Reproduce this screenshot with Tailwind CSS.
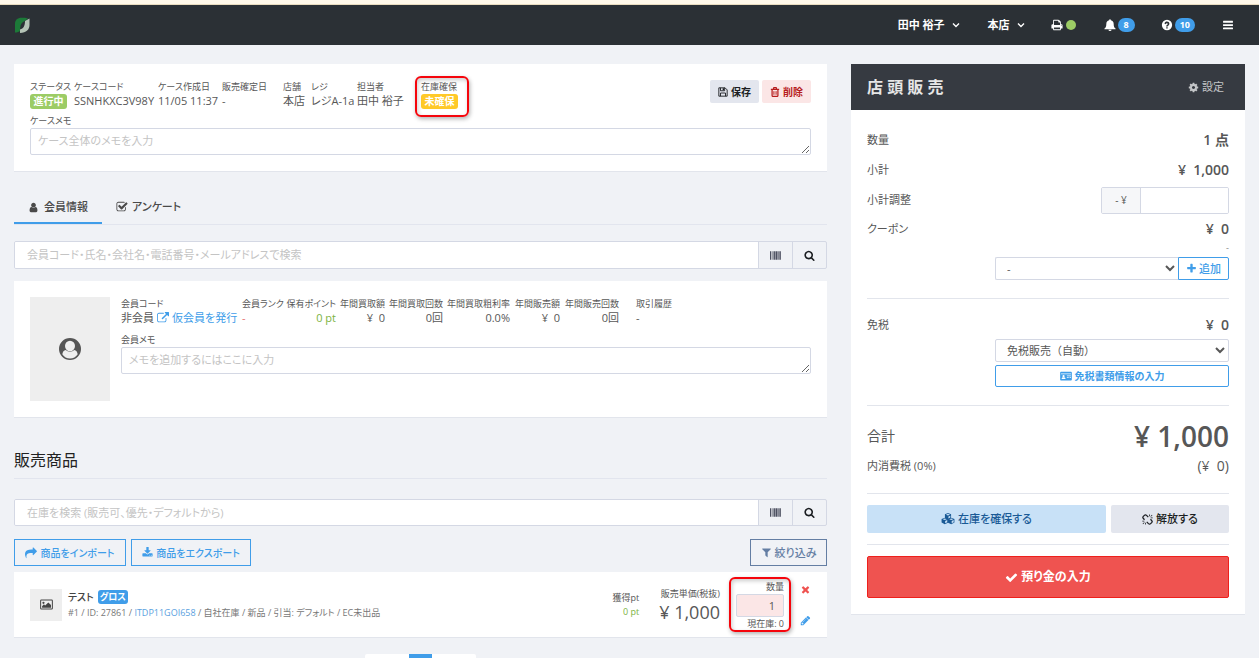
<!DOCTYPE html>
<html lang="ja">
<head>
<meta charset="utf-8">
<meta name="viewport" content="width=device-width, initial-scale=1">
<title>店頭販売</title>
<script src="https://cdn.jsdelivr.net/npm/@tailwindcss/browser@4"></script>
</head>
<body class="flex h-screen flex-col bg-[#f0f2f6] font-['Open_Sans','Noto_Sans_CJK_JP',sans-serif] text-[11px] leading-4 text-[#575757] [font-feature-settings:'palt']">
<svg class="hidden" aria-hidden="true">
  <symbol id="user" viewBox="0 0 1792 1792"><path d="M1536 1399q0 109-62.500 187t-150.500 78h-854q-88 0-150.500-78t-62.500-187q0-85 8.500-160.500t31.500-152 58.500-131 94-89 134.500-34.500q131 128 313 128t313-128q76 0 134.500 34.500t94 89 58.500 131 31.500 152 8.500 160.500zm-256-887q0 159-112.500 271.500t-271.500 112.500-271.500-112.500-112.500-271.500 112.500-271.500 271.500-112.500 271.500 112.500 112.500 271.500z"/></symbol>
  <symbol id="search" viewBox="0 0 1792 1792"><path d="M1216 832q0-185-131.5-316.5t-316.5-131.5-316.5 131.5-131.5 316.5 131.5 316.5 316.5 131.5 316.5-131.5 131.5-316.5zm512 832q0 52-38 90t-90 38q-54 0-90-38l-343-342q-179 124-399 124-143 0-273.5-55.5t-225-150-150-225-55.5-273.5 55.5-273.5 150-225 225-150 273.5-55.5 273.5 55.5 225 150 150 225 55.5 273.5q0 220-124 399l343 343q37 37 37 90z"/></symbol>
  <symbol id="check" viewBox="0 0 1792 1792"><path d="M1671 566q0 40-28 68l-724 724-136 136q-28 28-68 28t-68-28l-136-136-362-362q-28-28-28-68t28-68l136-136q28-28 68-28t68 28l294 295 656-657q28-28 68-28t68 28l136 136q28 28 28 68z"/></symbol>
  <symbol id="times" viewBox="0 0 1792 1792"><path d="M1490 1322q0 40-28 68l-136 136q-28 28-68 28t-68-28l-294-294-294 294q-28 28-68 28t-68-28l-136-136q-28-28-28-68t28-68l294-294-294-294q-28-28-28-68t28-68l136-136q28-28 68-28t68 28l294 294 294-294q28-28 68-28t68 28l136 136q28 28 28 68t-28 68l-294 294 294 294q28 28 28 68z"/></symbol>
  <symbol id="plus" viewBox="0 0 1792 1792"><path d="M1600 736v192q0 40-28 68t-68 28h-416v416q0 40-28 68t-68 28h-192q-40 0-68-28t-28-68v-416h-416q-40 0-68-28t-28-68v-192q0-40 28-68t68-28h416v-416q0-40 28-68t68-28h192q40 0 68 28t28 68v416h416q40 0 68 28t28 68z"/></symbol>
  <symbol id="pencil" viewBox="0 0 1792 1792"><path d="M491 1536l91-91-235-235-91 91v107h128v128h107zm523-928q0-22-22-22-10 0-17 7l-542 542q-7 7-7 17 0 22 22 22 10 0 17-7l542-542q7-7 7-17zm-54-192l416 416-832 832h-416v-416zm683 96q0 53-37 90l-166 166-416-416 166-165q36-38 90-38 53 0 91 38l235 234q37 39 37 91z"/></symbol>
  <symbol id="cog" viewBox="0 0 1792 1792"><path d="M1152 896q0-106-75-181t-181-75-181 75-75 181 75 181 181 75 181-75 75-181zm512-109v222q0 12-8 23t-20 13l-185 28q-19 54-39 91 35 50 107 138 10 12 10 25t-9 23q-27 37-99 108t-94 71q-12 0-26-9l-138-108q-44 23-91 38-16 136-29 186-7 28-36 28h-222q-14 0-24.5-8.5t-11.5-21.5l-28-184q-49-16-90-37l-141 107q-10 9-25 9-14 0-25-11-126-114-165-168-7-10-7-23 0-12 8-23 15-21 51-66.5t54-70.5q-27-50-41-99l-183-27q-13-2-21-12.5t-8-23.5v-222q0-12 8-23t19-13l186-28q14-46 39-92-40-57-107-138-10-12-10-24 0-10 9-23 26-36 98.5-107.5t94.5-71.5q13 0 26 10l138 107q44-23 91-38 16-136 29-186 7-28 36-28h222q14 0 24.5 8.5t11.5 21.5l28 184q49 16 90 37l142-107q9-9 24-9 13 0 25 10 129 119 165 170 7 8 7 22 0 12-8 23-15 21-51 66.5t-54 70.5q26 50 41 98l183 28q13 2 21 12.5t8 23.5z"/></symbol>
  <symbol id="filter" viewBox="0 0 1792 1792"><path d="M1595 295q17 41-14 70l-493 493v742q0 42-39 59-13 5-25 5-27 0-45-19l-256-256q-19-19-19-45v-486l-493-493q-31-29-14-70 17-39 59-39h1280q42 0 59 39z"/></symbol>
  <symbol id="share" viewBox="0 0 1792 1792"><path d="M1792 640q0 26-19 45l-512 512q-19 19-45 19t-45-19-19-45v-256h-224q-98 0-175.5 6t-154 21.5-133 42.5-105.5 69.5-80 101-48.5 138.5-17.5 181q0 55 5 123 0 6 2.5 23.5t2.5 26.5q0 15-8.5 25t-23.5 10q-16 0-28-17-7-9-13-22t-13.5-30-10.5-24q-127-285-127-451 0-199 53-333 162-403 875-403h224v-256q0-26 19-45t45-19 45 19l512 512q19 19 19 45z"/></symbol>
  <symbol id="download" viewBox="0 0 1792 1792"><path d="M1344 1344q0-26-19-45t-45-19-45 19-19 45 19 45 45 19 45-19 19-45zm256 0q0-26-19-45t-45-19-45 19-19 45 19 45 45 19 45-19 19-45zm128-224v320q0 40-28 68t-68 28h-1472q-40 0-68-28t-28-68v-320q0-40 28-68t68-28h465l135 136q58 56 136 56t136-56l136-136h464q40 0 68 28t28 68zm-325-569q17 41-14 70l-448 448q-18 19-45 19t-45-19l-448-448q-31-29-14-70 17-39 59-39h256v-448q0-26 19-45t45-19h256q26 0 45 19t19 45v448h256q42 0 59 39z"/></symbol>
  <symbol id="external" viewBox="0 0 1792 1792"><path d="M1408 928v320q0 119-84.500 203.500t-203.500 84.500h-832q-119 0-203.500-84.500t-84.500-203.500v-832q0-119 84.500-203.500t203.500-84.500h704q14 0 23 9t9 23v64q0 14-9 23t-23 9h-704q-66 0-113 47t-47 113v832q0 66 47 113t113 47h832q66 0 113-47t47-113v-320q0-14 9-23t23-9h64q14 0 23 9t9 23zm384-864v512q0 26-19 45t-45 19-45-19l-176-176-652 652q-10 10-23 10t-23-10l-114-114q-10-10-10-23t10-23l652-652-176-176q-19-19-19-45t19-45 45-19h512q26 0 45 19t19 45z"/></symbol>
  <symbol id="check-square" viewBox="0 0 1792 1792"><path d="M1472 930v318q0 119-84.5 203.5t-203.5 84.5h-832q-119 0-203.5-84.5t-84.5-203.5v-832q0-119 84.5-203.5t203.5-84.5h832q63 0 117 25 15 7 18 23 3 17-9 29l-49 49q-10 10-23 10-3 0-9-2-23-6-45-6h-832q-66 0-113 47t-47 113v832q0 66 47 113t113 47h832q66 0 113-47t47-113v-254q0-13 9-22l64-64q10-10 23-10 6 0 12 3 20 8 20 29zm231-489l-814 814q-24 24-57 24t-57-24l-430-430q-24-24-24-57t24-57l110-110q24-24 57-24t57 24l263 263 647-647q24-24 57-24t57 24l110 110q24 24 24 57t-24 57z"/></symbol>
  <symbol id="print" viewBox="0 0 1792 1792"><path d="M448 1536h896v-256h-896v256zm0-640h896v-384h-160q-40 0-68-28t-28-68v-160h-640v640zm1152 64q0-26-19-45t-45-19-45 19-19 45 19 45 45 19 45-19 19-45zm128 0v416q0 13-9.500 22.500t-22.500 9.500h-224v160q0 40-28 68t-68 28h-960q-40 0-68-28t-28-68v-160h-224q-13 0-22.500-9.500t-9.500-22.500v-416q0-79 56.500-135.500t135.500-56.500h64v-544q0-40 28-68t68-28h672q40 0 88 20t76 48l152 152q28 28 48 76t20 88v256h64q79 0 135.500 56.500t56.500 135.500z"/></symbol>
  <symbol id="bell" viewBox="0 0 14 14"><path d="M7 0.300c.6 0 1 .4 1 1v.3c2 .4 3.300 2 3.300 4.200 0 3 .9 4.400 2.200 5.400v.8H.5v-.8c1.300-1 2.200-2.400 2.200-5.400 0-2.200 1.300-3.800 3.300-4.200v-.3c0-.6.4-1 1-1zM5.200 12.500h3.600a1.800 1.500 0 0 1-3.600 0z"/></symbol>
  <symbol id="question" viewBox="0 0 14 14"><path fill-rule="evenodd" d="M7 1a6 6 0 1 1 0 12A6 6 0 0 1 7 1zM6.100 9.500v1.700h1.700V9.500zM4 5.200l1.300 1C5.900 5.300 6.300 5 6.900 5c.6 0 1 .3 1 .8 0 .9-1.900 1-1.900 2.700v.3h1.800c0-1 2-1.300 2-3.200C9.800 4 8.500 3 7 3 5.600 3 4.700 3.700 4 5.200z"/></symbol>
  <symbol id="bars" viewBox="0 0 12 12"><rect x="0" y="1" width="12" height="2.200" rx=".5"/><rect x="0" y="5" width="12" height="2.200" rx=".5"/><rect x="0" y="9" width="12" height="2.200" rx=".5"/></symbol>
  <symbol id="angle" viewBox="0 0 8 8"><path d="M1 2.500l3 3 3-3" fill="none" stroke="currentColor" stroke-width="1.400"/></symbol>
  <symbol id="floppy" viewBox="0 0 12 12"><path d="M1 1h7.500L11 3.500V11H1zM3 1v3.500h5V1M3 11V7.200h6V11" fill="none" stroke="currentColor" stroke-width="1.100"/><rect x="5.600" y="1.500" width="1.600" height="2.300"/></symbol>
  <symbol id="trash" viewBox="0 0 12 12"><path d="M1 2.800h10M4 2.500l.6-1.700h2.800L8 2.500M2.500 3v7.200q0 1.100 1 1.100h5q1 0 1-1.100V3" fill="none" stroke="currentColor" stroke-width="1.500"/><path d="M4.700 5v4.300M7.300 5v4.300" fill="none" stroke="currentColor" stroke-width="1.200"/></symbol>
  <symbol id="barcode" viewBox="0 0 13 10"><path d="M0 0h1.200v10H0zM2 0h.8v10H2zM3.400 0h.8v10h-.8zM4.800 0h1.700v10H4.800zM7 0h1.500v10H7zM9 0h.8v10H9zM10.200 0h1.200v10h-1.200zM12 0h1v10h-1z"/></symbol>
  <symbol id="person-circle" viewBox="0 0 24 24"><path fill-rule="evenodd" d="M12 1a11 11 0 1 1 0 22 11 11 0 0 1 0-22zm0 2.700A5 5.200 0 0 0 7 9a5 5.200 0 0 0 10 0 5 5.200 0 0 0-5-5.300zM4.300 17.200C6 20 8.800 21.600 12 21.600s6-1.600 7.700-4.400c-.4-2.200-1.500-4-3.400-4.200a6.300 6.300 0 0 1-8.600 0c-1.900.2-3 2-3.400 4.200z"/></symbol>
  <symbol id="cubes" viewBox="0 0 16 14"><path fill-rule="evenodd" d="M8 0l3.600 1.500v3.900L15.500 7v4.200L11.800 13 8 11.300 4.200 13 .5 11.200V7l3.900-1.600V1.500zm0 1L5.600 2 8 3l2.400-1zM8.500 4v2.300l2.200-1V3.100zM4.200 6.300L1.900 7.300l2.300 1 2.300-1zm7.600 0l-2.300 1 2.300 1 2.300-1zM4.700 9.300v2.600l2.400-1.100V8.300zm7.600 0v2.600l2.300-1.100V8.300z"/></symbol>
  <symbol id="unlink" viewBox="0 0 14 14"><g fill="none" stroke="currentColor" stroke-width="1.600"><path d="M3.200 7.300L1.800 5.800A2 2 0 0 1 1.700 3L3 1.700a2 2 0 0 1 2.800 0L8 4M10.800 6.700l1.400 1.500a2 2 0 0 1 .1 2.800L11 12.300a2 2 0 0 1-2.800 0L6 10"/></g><path d="M9 .500h1V3H9zM10.700 3l2-2 .6.600-2 2zM11 4.500h2.600v1H11zM.4 8.500H3v1H.4zM.7 12.400l2-2 .6.600-2 2zM4 11h1v2.500H4z"/></symbol>
  <symbol id="id-card" viewBox="0 0 14 12"><path fill-rule="evenodd" d="M1 1h12q1 0 1 1v8.500q0 1-1 1H1q-1 0-1-1V2q0-1 1-1zM1 3v.8h12V3zM4 4.700a1.300 1.400 0 1 0 .1 0zM1.800 9.500h4.600c0-1.500-.6-2-1.200-2.100q-1.100.7-2.200 0c-.6.100-1.200.6-1.200 2.100zM8 5.500v.9h5v-.9zm0 2v.9h2.300v-.9zm3.200 0v.9H13v-.9z"/></symbol>
  <symbol id="picture" viewBox="0 0 14 12"><rect x=".6" y="1.100" width="12.800" height="9.800" rx=".8" fill="none" stroke="currentColor" stroke-width="1.100"/><circle cx="3.700" cy="4.200" r="1.200"/><path d="M2.200 9.500V7.800l2-2 1.300 1.300 3.500-3.400 2.900 2.900v2.900z"/></symbol>
</svg>

<div class="h-[5px] shrink-0 border-b border-[#e9dcbf] bg-[#fff8ea]"></div>
<header class="flex h-10 shrink-0 items-center justify-between bg-[#2b3035] pr-[26px] pl-[14px] text-white">
  <a href="#" aria-label="ホーム">
    <svg class="size-4" viewBox="0 0 16 16"><path fill="#1c7a38" d="M1 15.500V7C1 3 3.500 .800 7.500 .800h3.500L14 1.500 11 4C8 5 6.300 7.500 6.200 11L6 13.500c-.5 1.500-3 2-5 2z"/><path fill="#b4c3b6" d="M15.500 1.500V8c0 4.500-3 7.500-9.500 8v-3.500c3.500-1 5-3.500 5-8.500z"/></svg>
  </a>
  <nav class="flex items-center text-[11px] font-bold">
    <button class="flex items-center gap-[7px]">田中 裕子<svg class="size-2"><use href="#angle"/></svg></button>
    <button class="ml-7 flex items-center gap-[7px]">本店<svg class="size-2"><use href="#angle"/></svg></button>
    <button class="ml-[26px] flex items-center gap-[3px]" aria-label="プリンタ"><svg class="size-3 fill-current"><use href="#print"/></svg><span class="size-[10px] rounded-full bg-[#9ccc65]"></span></button>
    <button class="ml-7 flex items-center gap-[2px]" aria-label="通知"><svg class="size-3 fill-current"><use href="#bell"/></svg><span class="rounded-full bg-[#409de9] px-[6px] text-[9px] leading-[14px]">8</span></button>
    <button class="ml-[26px] flex items-center gap-[2px]" aria-label="ヘルプ"><svg class="size-3 fill-current"><use href="#question"/></svg><span class="rounded-full bg-[#409de9] px-[5px] text-[9px] leading-[14px]">10</span></button>
    <button class="ml-7 flex" aria-label="メニュー"><svg class="size-[10px] fill-current"><use href="#bars"/></svg></button>
  </nav>
</header>

<main class="grid flex-1 grid-cols-[813fr_394fr] items-start gap-6 overflow-y-auto px-[14px] pt-[19px] [scrollbar-width:none]">
  <div class="min-w-0">
    <section class="border-b border-[#e2e5ec] bg-white p-4">
      <div class="flex items-start justify-between">
        <dl class="flex text-[11px] leading-[14px] whitespace-nowrap [&_dt]:text-[9px]">
          <div class="w-11"><dt>ステータス</dt><dd><span class="block w-[37px] rounded-[3px] bg-[#9ccc65] text-center text-[10px] leading-[15px] font-bold text-white">進行中</span></dd></div>
          <div class="w-[84px]"><dt>ケースコード</dt><dd>SSNHKXC3V98Y</dd></div>
          <div class="w-16"><dt>ケース作成日</dt><dd>11/05 11:37</dd></div>
          <div class="w-[61px]"><dt>販売確定日</dt><dd>-</dd></div>
          <div class="w-7"><dt>店舗</dt><dd>本店</dd></div>
          <div class="w-[46px]"><dt>レジ</dt><dd>レジA-1a</dd></div>
          <div class="w-16"><dt>担当者</dt><dd>田中 裕子</dd></div>
          <div class="relative"><dt>在庫確保</dt><dd><span class="block w-[37px] rounded-[3px] bg-[#ffc928] text-center text-[10px] leading-[15px] font-bold text-white">未確保</span></dd>
            <span class="absolute -top-1 -left-[6px] h-[41px] w-[54px] rounded-md border-2 border-[#f5050c] shadow-[1px_2px_4px_rgba(0,0,0,0.3),inset_1px_2px_4px_rgba(0,0,0,0.2)]"></span></div>
        </dl>
        <div class="flex gap-[3px] font-semibold">
          <button class="flex h-[23px] w-[49px] items-center justify-center gap-[3px] rounded-[2px] bg-[#e3e6ee] text-[10px] text-[#1b1e22]"><svg class="size-[10px] fill-current"><use href="#floppy"/></svg>保存</button>
          <button class="flex h-[23px] w-[49px] items-center justify-center gap-[3px] rounded-[2px] bg-[#fbe6e6] text-[10px] text-[#b71c1c]"><svg class="size-[10px] fill-current"><use href="#trash"/></svg>削除</button>
        </div>
      </div>
      <label for="case-memo" class="mt-[5px] block text-[9px] leading-[14px]">ケースメモ</label>
      <textarea id="case-memo" rows="1" class="block h-[27px] w-full resize rounded-[2px] border border-[#d4d8e4] bg-white px-[7px] py-1 text-[11px] leading-4 placeholder:text-[#c4c4c4]" placeholder="ケース全体のメモを入力"></textarea>
    </section>

    <div class="mt-4 flex gap-[14px] border-b border-[#e2e5ee] text-[11px] font-medium text-[#4a4a4a]" role="tablist">
      <button role="tab" aria-selected="true" class="flex h-9 items-center gap-[5px] border-b-2 border-[#409de9] px-[14px] pt-1"><svg class="size-[11px] fill-current"><use href="#user"/></svg>会員情報</button>
      <button role="tab" aria-selected="false" class="flex h-9 items-center gap-1 border-b-2 border-transparent pt-1"><svg class="size-3 fill-current"><use href="#check-square"/></svg>アンケート</button>
    </div>

    <div class="mt-4 flex h-7 overflow-hidden rounded-[2px] border border-[#d4d8e4]">
      <input aria-label="会員を検索" class="min-w-0 flex-1 bg-white px-3 text-[11px] placeholder:text-[#c4c4c4]" placeholder="会員コード・氏名・会社名・電話番号・メールアドレスで検索">
      <button aria-label="バーコード" class="flex w-[34px] items-center justify-center border-l border-[#d4d8e4] text-[#4c5060]"><svg class="h-[9px] w-[11px] fill-current"><use href="#barcode"/></svg></button>
      <button aria-label="検索" class="flex w-[34px] items-center justify-center border-l border-[#d4d8e4] text-[#1b1e22]"><svg class="size-[11px] fill-current"><use href="#search"/></svg></button>
    </div>

    <section class="mt-3 flex gap-[11px] border-b border-[#e2e5ec] bg-white p-4">
      <div class="flex h-[104px] w-20 shrink-0 items-center justify-center bg-[#eee] text-[#555]"><svg class="size-6 fill-current"><use href="#person-circle"/></svg></div>
      <div class="min-w-0 flex-1">
        <dl class="flex gap-1 text-[11px] leading-[14px] whitespace-nowrap [&_dt]:text-[9px]">
          <div class="w-[117px]"><dt>会員コード</dt><dd class="flex items-center gap-[3px]">非会員<a href="#" class="flex items-center gap-[3px] text-[#409de9]"><svg class="size-3 fill-current"><use href="#external"/></svg>仮会員を発行</a></dd></div>
          <div class="w-10"><dt>会員ランク</dt><dd class="text-[#e57373]">-</dd></div>
          <div class="w-[50px] text-right"><dt>保有ポイント</dt><dd class="text-[#7cb342]">0 pt</dd></div>
          <div class="w-[45px] text-right"><dt>年間買取額</dt><dd>¥&nbsp; 0</dd></div>
          <div class="w-[54px] text-right"><dt>年間買取回数</dt><dd>0回</dd></div>
          <div class="w-[63px] text-right"><dt>年間買取粗利率</dt><dd>0.0%</dd></div>
          <div class="w-[46px] text-right"><dt>年間販売額</dt><dd>¥&nbsp; 0</dd></div>
          <div class="w-[55px] text-right"><dt>年間販売回数</dt><dd>0回</dd></div>
          <div class="ml-[13px]"><dt>取引履歴</dt><dd>-</dd></div>
        </dl>
        <label for="member-memo" class="mt-2 block text-[9px] leading-[14px]">会員メモ</label>
        <textarea id="member-memo" rows="1" class="block h-[27px] w-full resize rounded-[2px] border border-[#d4d8e4] bg-white px-[7px] py-1 text-[11px] leading-4 placeholder:text-[#c4c4c4]" placeholder="メモを追加するにはここに入力"></textarea>
      </div>
    </section>

    <h2 class="mt-[30px] border-b border-[#e2e5ee] pb-[6px] text-base leading-6 text-[#222]">販売商品</h2>

    <div class="mt-5 flex h-[27px] overflow-hidden rounded-[2px] border border-[#d4d8e4]">
      <input aria-label="在庫を検索" class="min-w-0 flex-1 bg-white px-3 text-[11px] placeholder:text-[#c4c4c4]" placeholder="在庫を検索 (販売可、優先・デフォルトから)">
      <button aria-label="バーコード" class="flex w-[34px] items-center justify-center border-l border-[#d4d8e4] text-[#4c5060]"><svg class="h-[9px] w-[11px] fill-current"><use href="#barcode"/></svg></button>
      <button aria-label="検索" class="flex w-[34px] items-center justify-center border-l border-[#d4d8e4] text-[#1b1e22]"><svg class="size-[11px] fill-current"><use href="#search"/></svg></button>
    </div>

    <div class="mt-[13px] flex gap-[5px] font-medium">
      <button class="flex h-[27px] w-28 items-center justify-center gap-[3px] border border-[#409de9] text-[10px] text-[#409de9]"><svg class="size-3 fill-current"><use href="#share"/></svg>商品をインポート</button>
      <button class="flex h-[27px] w-[120px] items-center justify-center gap-[3px] border border-[#409de9] text-[10px] text-[#409de9]"><svg class="size-[11px] fill-current"><use href="#download"/></svg>商品をエクスポート</button>
      <button class="ml-auto flex h-[27px] w-[77px] items-center justify-center gap-[3px] border border-[#647ea3] text-[11px] text-[#647ea3]"><svg class="size-[11px] fill-current"><use href="#filter"/></svg>絞り込み</button>
    </div>

    <article class="mt-[6px] flex h-[66px] items-center border-b border-[#e2e5ec] bg-white px-4 whitespace-nowrap">
      <div class="flex size-8 shrink-0 items-center justify-center bg-[#eee] text-[#444]"><svg class="h-[11px] w-[13px] fill-current"><use href="#picture"/></svg></div>
      <div class="ml-[6px] flex-1">
        <div class="flex items-center gap-1 text-[10px] leading-[14px] font-medium text-[#444]">テスト<span class="w-[30px] rounded-[3px] bg-[#409de9] text-center text-[9px] leading-[14px] font-bold text-white">グロス</span></div>
        <div class="mt-[2px] text-[9px] leading-[14px] text-[#777]">#1 / ID: 27861 / <a href="#" class="text-[#5a9fe0]">ITDP11GOI658</a> / 自社在庫 / 新品 / 引当: デフォルト / EC未出品</div>
      </div>
      <div class="text-right text-[9px] leading-[14px]"><div>獲得pt</div><div class="text-[#7cb342]">0 pt</div></div>
      <div class="ml-5 text-right"><div class="text-[9px] leading-[14px]">販売単価(税抜)</div><div class="text-lg leading-[22px] font-medium">¥&nbsp;1,000</div></div>
      <div class="relative ml-4 w-12 pt-[2px] text-right text-[9px] leading-[14px]">
        <label for="qty" class="block">数量</label>
        <input id="qty" value="1" class="block h-[23px] w-full rounded-[2px] border border-[#d4d8e4] bg-[#fbe6e6] px-2 text-right text-[11px]">
        <div>現在庫: 0</div>
        <span class="pointer-events-none absolute -inset-x-[7px] -inset-y-px rounded-md border-2 border-[#f5050c] shadow-[1px_2px_4px_rgba(0,0,0,0.3),inset_1px_2px_4px_rgba(0,0,0,0.2)]"></span>
      </div>
      <div class="ml-4 flex w-[11px] flex-col gap-5">
        <button aria-label="削除" class="text-[#ef5350]"><svg class="size-[11px] fill-current"><use href="#times"/></svg></button>
        <button aria-label="編集" class="text-[#409de9]"><svg class="size-[11px] fill-current"><use href="#pencil"/></svg></button>
      </div>
    </article>

    <nav aria-label="ページ" class="mx-auto mt-4 flex h-7 w-[111px] justify-center rounded-[2px] bg-white"><a href="#" aria-current="page" aria-label="1ページ" class="w-[23px] bg-[#409de9]"></a></nav>
  </div>

  <aside class="border-b border-[#e2e5ec] bg-white">
    <div class="flex h-[46px] items-center justify-between bg-[#363a41] pr-[21px] pl-4">
      <h1 class="text-base font-bold text-[#e6e6e6]">店 頭 販 売</h1>
      <button class="flex items-center gap-[3px] text-[#c4c6c8]"><svg class="size-[11px] fill-current"><use href="#cog"/></svg>設定</button>
    </div>
    <div class="px-4 pt-[15px] pb-4">
      <div class="flex h-[30px] items-center justify-between"><span>数量</span><span class="text-sm font-semibold">1 点</span></div>
      <div class="flex h-[30px] items-center justify-between"><span>小計</span><span class="text-sm font-semibold">¥&nbsp; 1,000</span></div>
      <div class="flex h-[30px] items-center justify-between"><label for="adjust">小計調整</label>
        <div class="flex h-[27px] w-32 overflow-hidden rounded-[2px] border border-[#d4d8e4]"><span class="flex w-[39px] items-center justify-center border-r border-[#d4d8e4] bg-[#f6f7f9] text-[10px]">- ¥</span><input id="adjust" class="min-w-0 flex-1 bg-white px-2 text-right"></div></div>
      <div class="flex h-7 items-center justify-between"><label for="coupon">クーポン</label><span class="text-sm font-semibold">¥&nbsp; 0</span></div>
      <div class="h-[14px] text-right text-[9px] leading-[10px] text-[#888]">-</div>
      <div class="ml-auto flex h-[23px] w-[234px]">
        <select id="coupon" class="min-w-0 flex-1 rounded-l-[2px] border border-r-0 border-[#d4d8e4] bg-white px-[7px]"><option>-</option></select>
        <button class="flex w-[51px] items-center justify-center gap-[2px] rounded-r-[2px] border border-[#409de9] font-medium text-[#409de9]"><svg class="size-[11px] fill-current"><use href="#plus"/></svg>追加</button>
      </div>
      <div class="mt-[18px] flex h-[41px] items-end justify-between border-t border-[#e2e5ec] pb-[6px]"><label for="tax-free">免税</label><span class="text-sm leading-4 font-semibold">¥&nbsp; 0</span></div>
      <div class="ml-auto w-[234px]">
        <select id="tax-free" class="block h-[23px] w-full rounded-[2px] border border-[#d4d8e4] bg-white px-[7px] [font-feature-settings:normal]"><option>免税販売（自動）</option></select>
        <button class="mt-[3px] flex h-[22px] w-full items-center justify-center gap-[3px] rounded-[2px] border border-[#409de9] text-[10px] font-semibold text-[#409de9]"><svg class="h-[10px] w-3 fill-current"><use href="#id-card"/></svg>免税書類情報の入力</button>
      </div>
      <div class="mt-[18px] flex items-center justify-between border-t border-[#e2e5ec] pt-3"><span class="text-sm">合計</span><span class="text-[28px] leading-9 font-semibold">¥&nbsp;1,000</span></div>
      <div class="flex h-6 items-center justify-between"><span>内消費税 (0%)</span><span class="text-sm">(¥&nbsp; 0)</span></div>
      <div class="mt-[15px] flex gap-[5px] border-y border-[#e2e5ec] py-[11px] text-[11px] font-medium">
        <button class="flex h-7 flex-1 items-center justify-center gap-[3px] rounded-[2px] bg-[#c8e1f7] text-[#1a5a96]"><svg class="h-3 w-[14px] fill-current"><use href="#cubes"/></svg>在庫を確保する</button>
        <button class="flex h-7 w-[118px] items-center justify-center gap-[3px] rounded-[2px] bg-[#e3e6ee] text-[#1b1e22]"><svg class="size-[11px] fill-current"><use href="#unlink"/></svg>解放する</button>
      </div>
      <button class="mt-[11px] flex h-[42px] w-full items-center justify-center gap-[3px] rounded-[2px] border border-[#ee201c] bg-[#ef5350] text-xs font-bold text-white"><svg class="size-[13px] fill-current"><use href="#check"/></svg>預り金の入力</button>
    </div>
  </aside>
</main>
</body>
</html>
